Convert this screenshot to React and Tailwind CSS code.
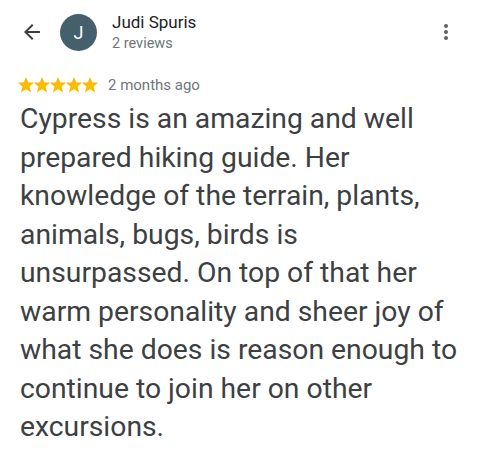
import React from "react";

const Star = () => (
  <svg width="16" height="16" viewBox="2 2 20 20" className="block">
    <path fill="#fbbc04" d="M12 17.27L18.18 21l-1.64-7.03L22 9.24l-7.19-.61L12 2 9.19 8.63 2 9.24l5.46 4.73L5.82 21z" />
  </svg>
);

export default function App() {
  return (
    <div className="w-[480px] h-[464px] bg-white overflow-hidden" style={{ fontFamily: "Roboto, 'Noto Sans', sans-serif" }}>
      <div className="flex items-center h-[64px] pl-[20px] pr-[22px]">
        <svg width="24" height="24" viewBox="0 0 24 24" className="block">
          <path fill="#3c4043" d="M20 11H7.83l5.59-5.59L12 4l-8 8 8 8 1.41-1.41L7.83 13H20v-2z" />
        </svg>
        <div className="ml-[16px] w-[37px] h-[37px] rounded-full bg-[#43606c] flex items-center justify-center text-white text-[18px]">J</div>
        <div className="ml-[15px] flex flex-col flex-1">
          <div className="text-[17px] leading-[22px] text-[#202124]">Judi Spuris</div>
          <div className="text-[14.5px] leading-[20px] text-[#70757a] mt-[1px]">2 reviews</div>
        </div>
        <svg width="24" height="24" viewBox="0 0 24 24" className="block">
          <circle cx="12" cy="6" r="2" fill="#5f6368" />
          <circle cx="12" cy="12" r="2" fill="#5f6368" />
          <circle cx="12" cy="18" r="2" fill="#5f6368" />
        </svg>
      </div>
      <div className="flex items-center pl-[18px] mt-[11px] h-[20px]">
        <div className="flex">
          <Star /><Star /><Star /><Star /><Star />
        </div>
        <span className="ml-[10px] text-[15px] text-[#70757a]">2 months ago</span>
      </div>
      <p className="mt-[5px] px-[20px] text-[28.3px] leading-[38.5px] text-[#3c4043]">
        Cypress is an amazing and well prepared hiking guide. Her knowledge of the terrain, plants, animals, bugs, birds is unsurpassed. On top of that her warm personality and sheer joy of what she does is reason enough to continue to join her on other excursions.
      </p>
    </div>
  );
}
